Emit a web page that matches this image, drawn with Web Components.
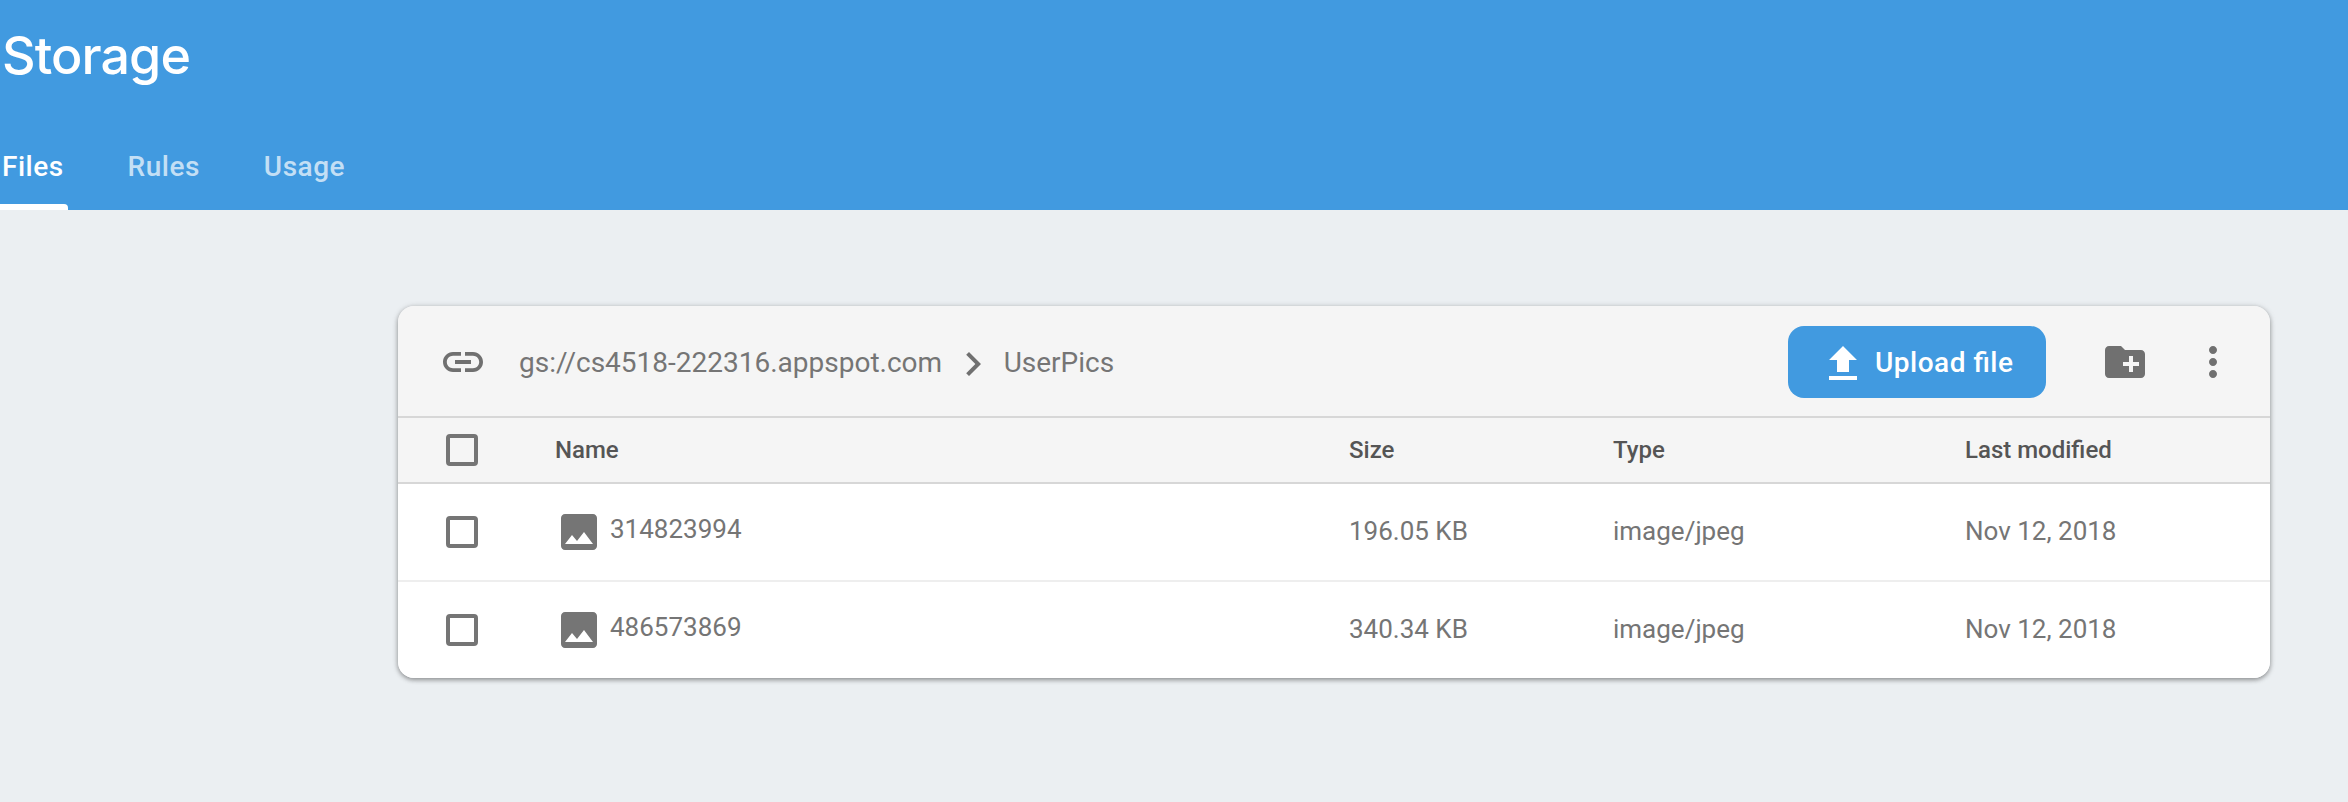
<!DOCTYPE html>
<html lang="en">
<head>
<meta charset="utf-8">
<title>Storage</title>
<style>
html,body{margin:0;padding:0;height:100%}
body{background:#ebeff2;font-family:Roboto,"Liberation Sans",sans-serif;color:#757575;overflow:hidden}
</style>
</head>
<body>
<storage-app></storage-app>
<script>
const define=(name,html)=>customElements.define(name,class extends HTMLElement{
  constructor(){super();const t=document.createElement('template');t.innerHTML=html;this.attachShadow({mode:'open'}).append(t.content.cloneNode(true));}
});

const ICONS={
  link:'M3.9 12c0-1.71 1.39-3.1 3.1-3.1h4V7H7c-2.76 0-5 2.24-5 5s2.24 5 5 5h4v-1.9H7c-1.71 0-3.1-1.39-3.1-3.1zM8 13h8v-2H8v2zm9-6h-4v1.9h4c1.71 0 3.1 1.39 3.1 3.1s-1.39 3.1-3.1 3.1h-4V17h4c2.76 0 5-2.24 5-5s-2.24-5-5-5z',
  chevron:'M10 6L8.59 7.41 13.17 12l-4.58 4.59L10 18l6-6z',
  upload:'M5 20h14v-2H5v2zM9 16h6v-6h4l-7-7-7 7h4v6z',
  folder:'M20 6h-8l-2-2H4c-1.11 0-1.99.89-1.99 2L2 18c0 1.11.89 2 2 2h16c1.11 0 2-.89 2-2V8c0-1.11-.89-2-2-2zm-1 8h-3v3h-2v-3h-3v-2h3V9h2v3h3v2z',
  more:'M12 8c1.1 0 2-.9 2-2s-.9-2-2-2-2 .9-2 2 .9 2 2 2zm0 2c-1.1 0-2 .9-2 2s.9 2 2 2 2-.9 2-2-.9-2-2-2zm0 6c-1.1 0-2 .9-2 2s.9 2 2 2 2-.9 2-2-.9-2-2-2z',
  image:'M21 19V5c0-1.1-.9-2-2-2H5c-1.1 0-2 .9-2 2v14c0 1.1.9 2 2 2h14c1.1 0 2-.9 2-2zM8.5 13.5l2.5 3.01L14.5 12l4.5 6H5l3.5-4.5z'
};
customElements.define('md-icon',class extends HTMLElement{
  connectedCallback(){
    if(this.shadowRoot)return;
    this.attachShadow({mode:'open'}).innerHTML=`<style>:host{display:block;width:48px;height:48px;flex:none}svg{display:block}</style>
<svg width="48" height="48" viewBox="0 0 24 24" fill="currentColor"><path d="${ICONS[this.getAttribute('name')]}"/></svg>`;
  }
});

define('check-box',`<style>:host{display:block;box-sizing:border-box;width:32px;height:32px;border:4px solid #757575;border-radius:4px}</style>`);

define('nav-tab',`<style>
:host{display:block;box-sizing:border-box;height:86px;padding-top:26px;font:500 28px/33px Roboto,sans-serif;letter-spacing:.5px;color:rgba(255,255,255,.7);position:relative;white-space:nowrap}
:host([active]){color:#fff}
:host([active])::after{content:"";position:absolute;left:-6px;right:-4.5px;bottom:0;height:6px;border-radius:4px 4px 0 0;background:#fff}
</style><slot></slot>`);

define('page-header',`<style>
:host{display:flex;flex-direction:column;justify-content:space-between;height:210px;background:#419ae0;overflow:hidden}
h1{margin:24px 0 0 2px;font:500 52px/64px Inter,sans-serif;letter-spacing:-.9px;color:#fff}
nav{display:flex;gap:64px;padding-left:2px}
</style><h1><slot name="title"></slot></h1><nav><slot></slot></nav>`);

define('upload-button',`<style>
:host{display:flex;align-items:center;box-sizing:border-box;width:258px;height:72px;padding-left:31px;border-radius:16px;background:#419ae0;color:#fff;font:500 28px/33px Roboto,sans-serif;letter-spacing:.5px;font-feature-settings:"liga" 1;white-space:nowrap}
md-icon{margin:4px 8px 0 0}
</style><md-icon name="upload"></md-icon><slot></slot>`);

define('file-toolbar',`<style>
:host{display:flex;align-items:center;box-sizing:border-box;height:112px;padding:2px 33px 0 41px;background:#f5f5f5;border-bottom:2px solid #d7d7d7;color:#707070;font-size:28px;line-height:33px}
.path{display:flex;align-items:center;flex:1;padding-left:32px;white-space:nowrap;color:#757575}
.path md-icon{margin:4px 6.5px 0 7px;color:#707070}
upload-button{margin-right:55px}
.folder{margin-right:40px}
</style>
<md-icon name="link"></md-icon>
<div class="path"><span>gs://cs4518-222316.appspot.com</span><md-icon name="chevron"></md-icon><span>UserPics</span></div>
<upload-button>Upload file</upload-button>
<md-icon class="folder" name="folder"></md-icon>
<md-icon name="more"></md-icon>`);

const cols='display:grid;grid-template-columns:109px 794px 264px 352px 1fr;align-items:center;box-sizing:border-box;padding-left:48px;white-space:nowrap;';
define('table-head',`<style>
:host{${cols}height:66px;background:#f5f5f5;border-bottom:2px solid #d7d7d7;font:500 24px/28px Roboto,sans-serif;color:#555}
</style><check-box></check-box><span>Name</span><span>Size</span><span>Type</span><span>Last modified</span>`);

define('file-row',`<style>
:host{${cols}height:96px;background:#fff;font-size:26px;line-height:30px}
:host(:not(:last-of-type)){height:98px;border-bottom:2px solid #eee}
.c{padding-bottom:2px}
.name{display:flex;align-items:center}
.name span{padding:0 0 6px 7px}
</style><check-box></check-box><div class="name"><md-icon name="image"></md-icon><span><slot name="name"></slot></span></div><span class="c"><slot name="size"></slot></span><span class="c"><slot name="type"></slot></span><span class="c"><slot name="date"></slot></span>`);

define('file-card',`<style>
:host{display:block;width:1872px;margin:96px 0 0 398px;border-radius:16px;box-shadow:0 2px 4px rgba(0,0,0,.28),0 1px 6px rgba(0,0,0,.2)}
.in{border-radius:16px;overflow:hidden}
</style><div class="in"><slot></slot></div>`);

define('storage-app',`<style>:host{display:block}</style>
<page-header><span slot="title">Storage</span><nav-tab active>Files</nav-tab><nav-tab>Rules</nav-tab><nav-tab>Usage</nav-tab></page-header>
<file-card>
<file-toolbar></file-toolbar>
<table-head></table-head>
<file-row><span slot="name">314823994</span><span slot="size">196.05 KB</span><span slot="type">image/jpeg</span><span slot="date">Nov 12, 2018</span></file-row>
<file-row><span slot="name">486573869</span><span slot="size">340.34 KB</span><span slot="type">image/jpeg</span><span slot="date">Nov 12, 2018</span></file-row>
</file-card>`);
</script>
</body>
</html>
